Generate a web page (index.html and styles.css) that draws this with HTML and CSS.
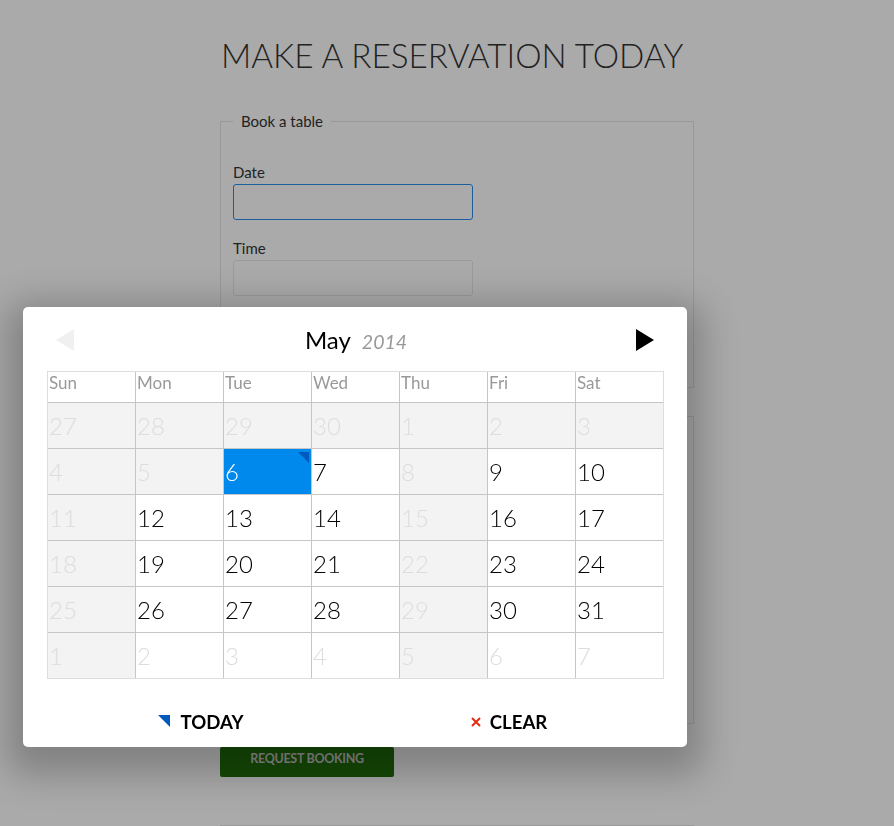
FILE: index.html
```html
<!DOCTYPE html>
<html lang="en">
<head>
<meta charset="utf-8">
<title>Make a reservation</title>
<link rel="stylesheet" href="styles.css">
</head>
<body>
<div class="page">
  <h1 class="title">MAKE A RESERVATION TODAY</h1>
  <fieldset class="box box-first">
    <legend class="legend">Book a table</legend>
    <label class="label label-date">Date</label>
    <div class="input input-active"></div>
    <label class="label label-time">Time</label>
    <div class="input"></div>
  </fieldset>
  <fieldset class="box box-second"></fieldset>
  <div class="btn">REQUEST BOOKING</div>
  <div class="rule"></div>
</div>

<div class="picker">
  <div class="picker-head">
    <svg class="nav nav-prev" width="18" height="22" viewBox="0 0 18 22"><path d="M18 0 L0 11 L18 22 Z" fill="#f0f0f0"/></svg>
    <div class="month-title"><span class="month">May</span><span class="year">2014</span></div>
    <svg class="nav nav-next" width="18" height="22" viewBox="0 0 18 22"><path d="M0 0 L18 11 L0 22 Z" fill="#000"/></svg>
  </div>
  <div class="cal">
    <div class="wd">Sun</div><div class="wd">Mon</div><div class="wd">Tue</div><div class="wd">Wed</div><div class="wd">Thu</div><div class="wd">Fri</div><div class="wd">Sat</div>

    <div class="d dis">27</div><div class="d dis">28</div><div class="d dis">29</div><div class="d dis">30</div><div class="d dis">1</div><div class="d dis">2</div><div class="d dis">3</div>

    <div class="d dis">4</div><div class="d dis">5</div><div class="d sel today">6</div><div class="d">7</div><div class="d dis">8</div><div class="d">9</div><div class="d">10</div>

    <div class="d dis">11</div><div class="d">12</div><div class="d">13</div><div class="d">14</div><div class="d dis">15</div><div class="d">16</div><div class="d">17</div>

    <div class="d dis">18</div><div class="d">19</div><div class="d">20</div><div class="d">21</div><div class="d dis">22</div><div class="d">23</div><div class="d">24</div>

    <div class="d dis">25</div><div class="d">26</div><div class="d">27</div><div class="d">28</div><div class="d dis">29</div><div class="d">30</div><div class="d">31</div>

    <div class="d dis">1</div><div class="d out">2</div><div class="d out">3</div><div class="d out">4</div><div class="d dis">5</div><div class="d out">6</div><div class="d out">7</div>
  </div>
  <div class="picker-foot">
    <div class="fbtn"><span class="tri"></span>TODAY</div>
    <div class="fbtn"><svg class="x" width="10" height="10" viewBox="0 0 10 10"><path d="M1 1 L9 9 M9 1 L1 9" stroke="#e62a12" stroke-width="2"/></svg>CLEAR</div>
  </div>
</div>
</body>
</html>
```

FILE: styles.css
```css
html, body {
  margin: 0;
  padding: 0;
}
body {
  background: #aaaaaa;
  font-family: Lato, "Open Sans", sans-serif;
  color: #222;
  width: 894px;
  height: 826px;
  overflow: hidden;
}
.page {
  width: 474px;
  margin-left: 220px;
  display: flex;
  flex-direction: column;
}
.title {
  margin: 34px 0 0 0;
  font-weight: 300;
  font-size: 33.3px;
  line-height: 42px;
  color: #222;
  white-space: nowrap;
  padding-left: 1px;
}
.box {
  margin: 0;
  border: 1px solid #999;
  padding: 0 12px;
  min-width: 0;
  box-sizing: border-box;
  width: 474px;
}
.box-first {
  margin-top: 35px;
  height: 277px;
  display: flex;
  flex-direction: column;
  align-items: flex-start;
}
.legend {
  padding: 0 8px;
  font-size: 15px;
  line-height: 20px;
  color: #222;
}
.label {
  font-size: 15px;
  line-height: 20px;
  color: #222;
}
.label-date { margin-top: 31px; }
.label-time { margin-top: 18px; }
.input {
  margin-top: 2px;
  width: 240px;
  height: 36px;
  box-sizing: border-box;
  border: 1px solid #9a9a9a;
  border-radius: 3px;
}
.input-active {
  border-color: #1d5e9e;
}
.box-second {
  margin-top: 28px;
  height: 308px;
}
.btn {
  margin-top: 23px;
  width: 174px;
  height: 30px;
  background: #154a06;
  border-radius: 2px;
  color: #8a8a8a;
  font-weight: 700;
  font-size: 12.5px;
  line-height: 24px;
  text-align: center;
  letter-spacing: -0.3px;
}
.rule {
  margin-top: 48px;
  height: 1px;
  background: #9a9a9a;
}

/* picker */
.picker {
  position: fixed;
  left: 23px;
  top: 307px;
  width: 664px;
  height: 440px;
  box-sizing: border-box;
  padding: 0 24px;
  background: #fff;
  border-radius: 5px;
  box-shadow: 0 12px 36px 16px rgba(0, 0, 0, 0.24);
}
.picker-head {
  height: 64px;
  display: flex;
  align-items: center;
  justify-content: space-between;
  padding: 2px 9px 0;
  box-sizing: border-box;
}
.month-title {
  display: flex;
  align-items: baseline;
  margin-left: 2px;
  margin-top: -2px;
}
.month {
  font-size: 24px;
  color: #000;
}
.year {
  font-size: 19.5px;
  font-style: italic;
  color: #999;
  margin-left: 11px;
}
.cal {
  display: grid;
  grid-template-columns: repeat(7, 87px);
  grid-template-rows: 30px repeat(6, 45px);
  gap: 1px;
  background: #c6c6c6;
  border: 1px solid #ddd;
  width: 617px;
  box-sizing: border-box;
}
.wd {
  background: #fff;
  color: #999;
  font-size: 17px;
  line-height: 22px;
  padding-left: 1px;
}
.d {
  position: relative;
  background: #fff;
  color: #000;
  font-size: 24px;
  font-weight: 300;
  line-height: 46px;
  padding-left: 1px;
}
.d.dis {
  background: #f3f3f3;
  color: #dddddd;
}
.d.out {
  color: #dddddd;
}
.d.sel {
  background: #0089ec;
  color: #fff;
}
.d.today::before {
  content: "";
  position: absolute;
  top: 3px;
  right: 2px;
  width: 0;
  height: 0;
  border-top: 11px solid #0059bc;
  border-left: 11px solid transparent;
}
.picker-foot {
  display: grid;
  grid-template-columns: 1fr 1fr;
  margin-top: 28px;
}
.fbtn {
  display: flex;
  align-items: center;
  justify-content: center;
  height: 30px;
  font-weight: 700;
  font-size: 18.6px;
  color: #000;
}
.tri {
  width: 0;
  height: 0;
  border-top: 12px solid #0059bc;
  border-left: 12px solid transparent;
  margin-right: 10px;
  margin-top: -2px;
}
.x {
  margin-right: 9px;
}
```
